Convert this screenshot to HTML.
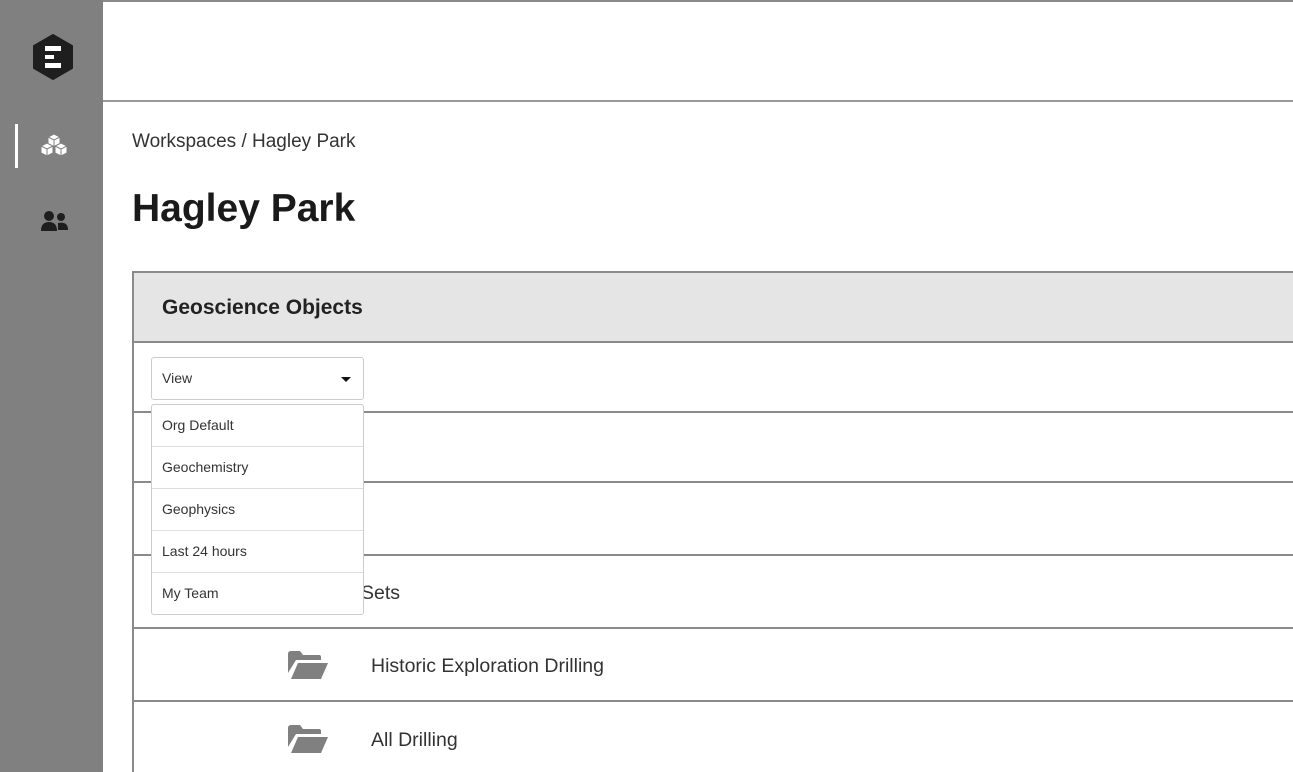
<!DOCTYPE html>
<html><head><style>
*{box-sizing:border-box;margin:0;padding:0}
html,body{width:1293px;height:772px;overflow:hidden}
body{background:#fff;font-family:"Liberation Sans",sans-serif;position:relative}
.sb{position:absolute;left:0;top:0;width:103px;height:772px;background:#808080}
.top{position:absolute;left:103px;top:0;right:0;height:2px;background:#8a8a8a}
.hdr{position:absolute;left:103px;top:100px;right:0;height:2px;background:#999}
.bc{position:absolute;left:132px;top:131px;font-size:19px;color:#333}
h1{position:absolute;left:132px;top:187px;font-size:39px;font-weight:bold;color:#1a1a1a}
.panel{position:absolute;left:132px;top:271px;width:1170px;height:510px;border:2px solid #8a8a8a}
.ph{height:70px;background:#e5e5e5;border-bottom:2px solid #8a8a8a;padding:23px 0 0 28px;font-size:21px;font-weight:bold;color:#222}
.line{position:absolute;left:132px;right:0;height:2px;background:#8a8a8a}
.row{position:absolute;left:371px;font-size:19.5px;color:#333}
.sel{position:absolute;left:151px;top:357px;width:213px;height:43px;border:1px solid #ccc;border-radius:3px;background:#fff;font-size:14px;color:#333;padding:12px 0 0 10px}
.menu{position:absolute;left:151px;top:404px;width:213px;height:211px;border:1px solid #ccc;border-radius:3px;background:#fff}
.menu div{height:42px;border-bottom:1px solid #ddd;font-size:14px;color:#333;padding:12px 0 0 10px}
.menu div:last-child{border-bottom:none}
</style></head><body>
<div class="sb">
<svg style="position:absolute;left:32px;top:34px" width="42" height="46" viewBox="0 0 42 46"><path d="M21 1 L40 12 L40 34 L21 45 L2 34 L2 12 Z" fill="#1e1e1e" stroke="#1e1e1e" stroke-linejoin="round" stroke-width="2"/><rect x="13" y="12" width="16" height="5" fill="#fff"/><rect x="13" y="21" width="9" height="4" fill="#fff"/><rect x="13" y="29" width="16" height="5" fill="#fff"/></svg>
<div style="position:absolute;left:15px;top:124px;width:3px;height:44px;background:#fff"></div>
<svg style="position:absolute;left:40px;top:133px" width="30" height="26" viewBox="0 0 30 26"><g fill="#fff" stroke="#808080" stroke-width="1"><path d="M8 4 L14 1 L20 4 L20 11 L14 14 L8 11Z"/><path d="M1 13 L7 10 L13 13 L13 20 L7 23 L1 20Z"/><path d="M15 13 L21 10 L27 13 L27 20 L21 23 L15 20Z"/></g><g stroke="#808080" stroke-width="1" fill="none"><path d="M8 4 L14 7 L20 4 M14 7 L14 14 M1 13 L7 16 L13 13 M7 16 L7 23 M15 13 L21 16 L27 13 M21 16 L21 23"/></g></svg>
<svg style="position:absolute;left:40px;top:210px" width="30" height="22" viewBox="0 0 30 22"><circle cx="9" cy="6" r="5" fill="#1e1e1e"/><circle cx="21" cy="7" r="4" fill="#1e1e1e"/><path d="M1 21 Q1 12 9 12 Q17 12 17 21Z" fill="#1e1e1e"/><path d="M18 13 Q28 11 28 20 L18 20Z" fill="#1e1e1e"/></svg>
</div>
<div class="top"></div><div class="hdr"></div>
<div class="bc">Workspaces / Hagley Park</div>
<h1>Hagley Park</h1>
<div class="panel"><div class="ph">Geoscience Objects</div></div>
<div class="line" style="top:411px"></div>
<div class="line" style="top:481px"></div>
<div class="line" style="top:554px"></div>
<div class="line" style="top:627px"></div>
<div class="line" style="top:700px"></div>
<div class="row" style="top:582px;left:296px">Drilling Sets</div>
<div class="row" style="top:655px">Historic Exploration Drilling</div>
<div class="row" style="top:729px">All Drilling</div>
<svg style="position:absolute;left:287px;top:651px" width="42" height="29" viewBox="0 0 42 29"><path d="M1 3 Q1 0 4 0 L13 0 L16 4 L32 4 Q34 4 34 6 L34 9 L9 9 L1 22Z" fill="#808080"/><path d="M4 28 L11 12 L41 12 L34 28Z" fill="#808080"/></svg>
<svg style="position:absolute;left:287px;top:725px" width="42" height="29" viewBox="0 0 42 29"><path d="M1 3 Q1 0 4 0 L13 0 L16 4 L32 4 Q34 4 34 6 L34 9 L9 9 L1 22Z" fill="#808080"/><path d="M4 28 L11 12 L41 12 L34 28Z" fill="#808080"/></svg>
<div class="sel">View<svg style="position:absolute;left:189px;top:19px" width="10" height="6"><path d="M0 0 L10 0 L5 5Z" fill="#111"/></svg></div>
<div class="menu"><div>Org Default</div><div>Geochemistry</div><div>Geophysics</div><div>Last 24 hours</div><div>My Team</div></div>
</body></html>
